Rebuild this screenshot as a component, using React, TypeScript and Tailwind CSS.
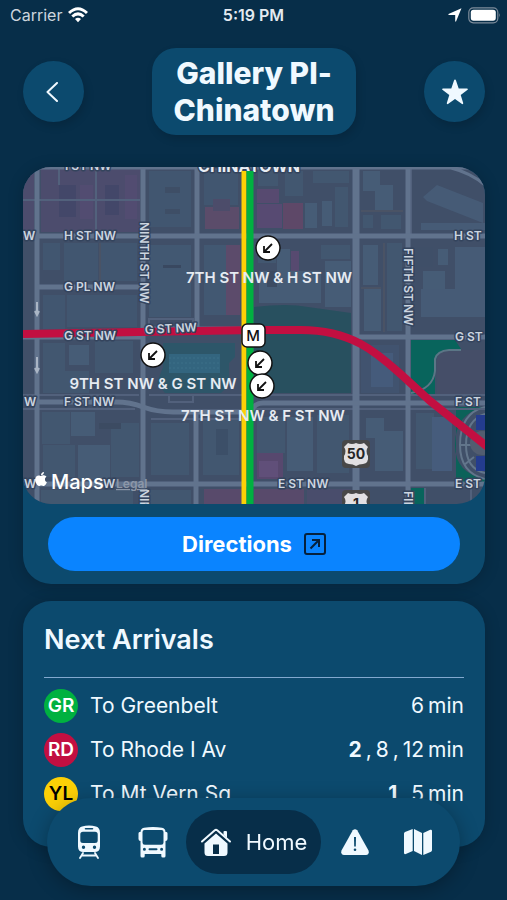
import type { ReactNode } from 'react';
import { FaApple } from 'react-icons/fa';

interface Arrival {
  code: string;
  destination: string;
  minutes: string[];
  badge: string;
  boarding?: boolean;
}

const ARRIVALS: Arrival[] = [
  { code: 'GR', destination: 'To Greenbelt', minutes: ['6'], badge: 'bg-[#00b140] text-white' },
  { code: 'RD', destination: 'To Rhode I Av', minutes: ['2', '8', '12'], badge: 'bg-[#c20f41] text-white', boarding: true },
  { code: 'YL', destination: 'To Mt Vern Sq', minutes: ['1', '5'], badge: 'bg-[#fcd006] text-black', boarding: true }
];

// [x, y, width, height, fill]
const BLOCKS: [number, number, number, number, string][] = [
  [18, 0, 99, 65, '#4c4c6d'],
  [0, 0, 11, 65, '#4c4c6d'],
  [36, 18, 17, 32, '#434769'],
  [57, 18, 13, 34, '#524c71'],
  [82, 18, 14, 30, '#434769'],
  [102, 8, 12, 44, '#524c71'],
  [126, 4, 42, 56, '#415670'],
  [142, 20, 15, 6, '#3e4e66'],
  [142, 42, 15, 5, '#3e4e66'],
  [181, 3, 34, 35, '#415670'],
  [182, 40, 34, 22, '#5b4c6a'],
  [190, 32, 17, 12, '#4c4c6a'],
  [20, 76, 17, 27, '#415670'],
  [41, 76, 34, 38, '#415670'],
  [78, 76, 36, 38, '#415670'],
  [20, 128, 22, 34, '#415670'],
  [44, 128, 70, 32, '#415670'],
  [126, 78, 42, 72, '#425872'],
  [140, 98, 18, 3, '#394860'],
  [181, 78, 22, 70, '#425872'],
  [203, 78, 14, 70, '#5c4b6b'],
  [235, 3, 20, 16, '#425770'],
  [234, 22, 22, 14, '#574a70'],
  [234, 37, 25, 24, '#574a72'],
  [260, 36, 20, 26, '#5e4868'],
  [282, 36, 12, 25, '#465c76'],
  [299, 34, 10, 25, '#465c76'],
  [262, 4, 18, 25, '#425770'],
  [290, 4, 36, 12, '#425770'],
  [312, 20, 13, 40, '#425770'],
  [340, 4, 17, 20, '#465c76'],
  [352, 18, 18, 26, '#465c76'],
  [340, 48, 10, 13, '#425770'],
  [358, 48, 20, 14, '#425770'],
  [235, 78, 18, 18, '#425770'],
  [254, 82, 13, 52, '#465c76'],
  [268, 84, 8, 20, '#574a70'],
  [236, 104, 62, 32, '#465c76'],
  [302, 94, 26, 46, '#465c76'],
  [298, 78, 29, 14, '#425770'],
  [244, 104, 10, 16, '#3c4b62'],
  [340, 78, 15, 40, '#465c76'],
  [341, 122, 17, 42, '#465c76'],
  [364, 76, 15, 88, '#425770'],
  [392, 80, 18, 20, '#3f4f68'],
  [400, 104, 22, 20, '#465c76'],
  [415, 82, 10, 16, '#465c76'],
  [432, 80, 30, 50, '#465b76'],
  [398, 122, 64, 28, '#465b76'],
  [338, 178, 38, 48, '#41536f'],
  [348, 186, 22, 34, '#455b7b'],
  [20, 176, 22, 28, '#425770'],
  [46, 178, 20, 20, '#465c76'],
  [72, 174, 38, 32, '#425770'],
  [20, 204, 46, 22, '#425770'],
  [19, 245, 28, 32, '#425770'],
  [48, 245, 24, 24, '#465c76'],
  [20, 278, 32, 32, '#425770'],
  [55, 278, 32, 34, '#465c76'],
  [88, 256, 28, 54, '#425770'],
  [76, 256, 22, 6, '#3c4b62'],
  [128, 256, 38, 52, '#425770'],
  [180, 252, 36, 56, '#425770'],
  [193, 262, 12, 26, '#3c4f68'],
  [234, 250, 28, 36, '#425770'],
  [264, 250, 26, 54, '#465c76'],
  [294, 248, 32, 58, '#425770'],
  [234, 286, 26, 26, '#57486e'],
  [236, 294, 19, 16, '#604f79'],
  [343, 251, 18, 20, '#465c76'],
  [352, 264, 28, 40, '#465c76'],
  [393, 246, 18, 56, '#425770'],
  [409, 250, 20, 54, '#465c7c'],
  [18, 323, 92, 14, '#435870'],
  [126, 323, 42, 14, '#425770'],
  [181, 322, 38, 15, '#584a6b'],
  [231, 322, 50, 15, '#584a6b'],
  [284, 322, 44, 15, '#494d6c']
];

const STREET_LABELS: [number, number, string][] = [
  [41, 73, 'H ST NW'],
  [41, 124, 'G PL NW'],
  [41, 173, 'G ST NW'],
  [41, 239, 'F ST NW'],
  [0, 73, 'W'],
  [1, 239, 'W'],
  [1, 321, 'W'],
  [80, 321, 'W'],
  [255, 321, 'E ST NW'],
  [431, 73, 'H ST'],
  [432, 174, 'G ST'],
  [432, 239, 'F ST'],
  [432, 321, 'E ST']
];

const STOPS: [number, number][] = [
  [245, 81],
  [130, 188],
  [237, 196],
  [239, 219]
];

function Shield({ x, y, route }: { x: number; y: number; route: string }) {
  return (
    <g transform={`translate(${x} ${y})`}>
      <rect x="-14" y="-14" width="28" height="28" rx="4" fill="#484848" />
      <path
        d="M-8-11Q-4-9 0-11Q4-9 8-11L12-7Q9-3 12 2Q13 9 7 10Q3 10 0 12Q-3 10-7 10Q-13 9-12 2Q-9-3-12-7Z"
        fill="#e2e0e2"
      />
      <text y="5" textAnchor="middle" fontSize="14" fontWeight="700" fill="#262626">
        {route}
      </text>
    </g>
  );
}

function StationMap() {
  return (
    <svg
      viewBox="0 0 462 337"
      className="block h-auto w-full rounded-[28px] font-[Inter,'Liberation_Sans',sans-serif]"
      role="img"
      aria-label="Map of Gallery Pl-Chinatown"
    >
      <rect width="462" height="337" fill="#404f68" />
      {BLOCKS.map(([x, y, width, height, fill], index) => (
        <rect key={index} x={x} y={y} width={width} height={height} fill={fill} />
      ))}
      <path d="M400 30L414 18L460 36V56L404 34ZM398 56H462V63H398Z" fill="#465b76" />

      {/* Museum and parks */}
      <path d="M231 140Q265 136 285 140L328 146V226H231Z" fill="#28505f" />
      <path d="M140 176H212V190L206 196V218L198 226H142L134 216L140 200Z" fill="#2d5669" />
      <path d="M146 187H197V206H146Z" fill="#33657f" />
      <path d="M146 191H197M146 196H197M146 201H197" stroke="#3d7089" strokeDasharray="2 2" />
      <path d="M388 173H432L438 182L418 185Q412 188 412 202V228H388Z" fill="#08645c" />
      <path d="M462 240Q432 246 432 278Q432 306 462 312V317H433V240Z" fill="#0b6259" />
      <rect x="388" y="321" width="14" height="16" fill="#08645c" />
      <path d="M414 228V192Q414 184 426 183H462V228Z" fill="#454e68" />
      <path d="M388 226Q410 222 412 204V192Q414 184 426 183H438" fill="none" stroke="#5b7686" strokeWidth="2" />
      <path d="M462 240Q437 246 437 278Q437 306 462 312M462 247Q443 253 443 278Q443 302 462 306M437 278H448M441 258L451 266M441 298L451 290" fill="none" stroke="#62758b" strokeWidth="2" />
      <circle cx="459" cy="276" r="12" fill="#525d70" />
      <path d="M453 248H462V263H453ZM453 289H462V304H453Z" fill="#243c8f" />

      {/* Minor ways */}
      <g fill="none" stroke="#52617c" strokeWidth="2">
        <path d="M0 33H117M73 0V65M36 0V18" />
        <path d="M0 228H116M0 242H112M126 228H219M128 252H219M231 228H462M231 242H462" />
        <path d="M388 0V70M126 163H170V152H126ZM146 227V235H170V227" />
        <path d="M77 76V114M338 44H380M338 121H358" stroke="#4a5365" />
        <path d="M361 76V165" stroke="#4a5365" />
        <path d="M402 321V337M448 322V337" />
      </g>
      {/* Streets */}
      <g fill="none" stroke="#61738d" strokeWidth="5">
        <path d="M14 0V337M120 0V337M174 0V163M173 246V337M385 0V337" />
        <path d="M333 0V337" strokeWidth="7" />
        <path d="M0 69H462M14 120H118M0 170H120M120 162H219M333 170H462M0 317H462" />
        <path d="M14 235H92Q108 235 120 240Q134 245 150 245H219M229 243Q232 236 240 236H462" />
        <path d="M428 1Q448 6 462 18M0 1H462" strokeWidth="3" />
      </g>
      <path d="M14 135V147M12 144L14 148L16 144M14 190V204M12 201L14 205L16 201" fill="none" stroke="#aab5c5" strokeWidth="2" />

      <g fontSize="12" fontWeight="600" fill="#ccd5e0" stroke="#34445d" strokeWidth="3" strokeLinejoin="round" paintOrder="stroke">
        <text x="42" y="3">I ST NW</text>
        <text x="226" y="5" textAnchor="middle" fontSize="16" fontWeight="700" fill="#e8edf4">
          CHINATOWN
        </text>
      </g>

      {/* Metro lines */}
      <path d="M0 167L232 163H278C334 163 359 191 382 211L407 234L466 281" fill="none" stroke="#c20f41" strokeWidth="8" />
      <path d="M221 4V337" stroke="#fcd006" strokeWidth="5" />
      <path d="M227 4V337" stroke="#00b140" strokeWidth="7" />

      <g fontSize="12" fontWeight="600" fill="#ccd5e0" stroke="#34445d" strokeWidth="3" strokeLinejoin="round" paintOrder="stroke">
        {STREET_LABELS.map(([x, y, label]) => (
          <text key={`${label}-${x}-${y}`} x={x} y={y}>
            {label}
          </text>
        ))}
        <text transform="translate(122 167) rotate(-3)">G ST NW</text>
        <text transform="translate(117 55) rotate(90)">NINTH ST NW</text>
        <text transform="translate(381 81) rotate(90)">FIFTH ST NW</text>
        <text transform="translate(117 322) rotate(90)">NINTH</text>
        <text transform="translate(381 324) rotate(90)">FIFTH</text>
      </g>
      <Shield x={333} y={287} route="50" />
      <Shield x={333} y={337} route="1" />

      {STOPS.map(([x, y]) => (
        <g key={`${x}-${y}`} transform={`translate(${x} ${y})`}>
          <circle r="12" fill="#fff" stroke="#111" strokeWidth="1.5" />
          <path d="M4-4L-4 4M-4-2V4H2" fill="none" stroke="#111" strokeWidth="1.8" />
        </g>
      ))}
      <rect x="219" y="157" width="23" height="23" rx="5" fill="#fff" stroke="#111" strokeWidth="1.5" />
      <text x="230" y="174" textAnchor="middle" fontSize="15" fontWeight="500" fill="#111">
        M
      </text>
      <g fontSize="15" fontWeight="600" fill="#e6ebf2" textAnchor="middle">
        <text x="246" y="116">7TH ST NW &amp; H ST NW</text>
        <text x="130" y="222">9TH ST NW &amp; G ST NW</text>
        <text x="240" y="254">7TH ST NW &amp; F ST NW</text>
      </g>

      <FaApple x="10" y="304" width="20" height="19" color="#fff" />
      <text x="28" y="322" fontSize="20" fontWeight="500" fill="#fff">
        Maps
      </text>
      <a href="#legal">
        <text x="93" y="321" fontSize="12" fontWeight="600" fill="#8c97a8" textDecoration="underline">
          Legal
        </text>
      </a>
    </svg>
  );
}

function TrainIcon() {
  return (
    <svg viewBox="0 0 24 34" className="h-[34px] w-6" fill="currentColor">
      <path
        fillRule="evenodd"
        d="M5 1.500Q12-.5 19 1.500Q23 2.500 23 8V21.500Q23 27 17.500 27H6.500Q1 27 1 21.500V8Q1 2.500 5 1.500ZM8.500 3Q7.700 3 7.700 3.800Q7.700 4.600 8.500 4.600H15.500Q16.300 4.600 16.300 3.800Q16.300 3 15.500 3ZM6 6.700Q3.300 6.700 3.300 9.500V15.500Q3.300 18 6 18H18Q20.700 18 20.700 15.500V9.500Q20.700 6.700 18 6.700ZM4.800 22.200A1.700 1.700 0 1 0 8.200 22.200A1.700 1.700 0 1 0 4.800 22.200ZM15.800 22.200A1.700 1.700 0 1 0 19.200 22.200A1.700 1.700 0 1 0 15.800 22.200Z"
      />
      <path d="M6 28L3 33M18 28L21 33M5 30.500H19" fill="none" stroke="currentColor" strokeWidth="1.800" strokeLinecap="round" />
    </svg>
  );
}

function BusIcon() {
  return (
    <svg viewBox="0 0 30 32" className="h-8 w-[30px]" fill="currentColor">
      <path
        fillRule="evenodd"
        d="M2.500 6Q2.500 2.500 6 1.800Q15 .4 24 1.800Q27.500 2.500 27.500 6H28.500Q29.500 6 29.500 7.500V13Q29.500 15 27.500 15V30Q27.500 31.500 26 31.500H24.800Q23.300 31.500 23.300 30V28H6.700V30Q6.700 31.500 5.200 31.500H4Q2.500 31.500 2.500 30V15Q.5 15 .5 13V7.500Q.5 6 1.500 6ZM6.500 4Q4.500 4 4.500 6V16.500Q4.500 18.800 6.800 18.800H23.200Q25.500 18.800 25.500 16.500V6Q25.500 4 23.500 4ZM4.900 23.300A1.500 1.500 0 1 0 7.900 23.300A1.500 1.500 0 1 0 4.900 23.300ZM22.100 23.300A1.500 1.500 0 1 0 25.100 23.300A1.500 1.500 0 1 0 22.100 23.300ZM11.500 22.300Q10.500 22.300 10.500 23.300Q10.500 24.300 11.500 24.300H18.500Q19.500 24.300 19.500 23.300Q19.500 22.300 18.500 22.300Z"
      />
    </svg>
  );
}

function HomeIcon() {
  return (
    <svg viewBox="0 0 32 30" className="h-[30px] w-8" fill="currentColor">
      <path d="M2 14.500L14.800 3.300Q16 2.400 17.200 3.300L30 14.500" fill="none" stroke="currentColor" strokeWidth="2" strokeLinecap="round" />
      <path d="M23.500 5Q23.500 4 24.500 4H26Q27 4 27 5V11L23.500 7.800Z" />
      <path fillRule="evenodd" d="M16 6.500L27.500 16.500V25.500Q27.500 29 24 29H8Q4.500 29 4.500 25.500V16.500ZM13 17.500V27H19V17.500Z" />
    </svg>
  );
}

function AlertIcon() {
  return (
    <svg viewBox="0 0 28 26" className="h-[26px] w-7">
      <path d="M11.800 1.300Q14-.8 16.200 1.300L27.500 21.500Q28.600 25.500 25 26H3Q-.6 25.500 .5 21.500Z" fill="currentColor" />
      <path d="M13 8H15L14.800 17.500H13.200Z" fill="#0c4a6e" />
      <circle cx="14" cy="20.700" r="1.300" fill="#0c4a6e" />
    </svg>
  );
}

function MapIcon() {
  return (
    <svg viewBox="0 0 28 26" className="h-[26px] w-7" fill="currentColor">
      <path d="M0 4.500Q0 3.500 1 3L8.700 0V22L1.800 25Q0 25.500 0 24ZM10 0L18 4V26L10 22ZM19.300 4L26.200 .8Q28 .2 28 2V21Q28 22 27 22.700L19.300 26Z" />
    </svg>
  );
}

function RoundButton({ label, children }: { label: string; children: ReactNode }) {
  return (
    <button
      type="button"
      aria-label={label}
      className="flex size-[61px] shrink-0 items-center justify-center rounded-full bg-[#0c4a6e] shadow-[2px_4px_8px_rgba(0,0,0,0.15)]"
    >
      {children}
    </button>
  );
}

function StatusBar() {
  return (
    <div className="grid h-[30px] grid-cols-3 items-center px-2.5 text-base">
      <div className="flex items-center gap-1.5 text-[#ccd5de]">
        <span>Carrier</span>
        <svg viewBox="0 0 20 16" className="h-4 w-5" fill="none" stroke="#fff" strokeWidth="3">
          <path d="M1 6Q10-2.500 19 6M4.300 9.500Q10 4.300 15.700 9.500" />
          <path d="M7 12Q10 9.300 13 12L10 15.300Z" fill="#fff" stroke="none" />
        </svg>
      </div>
      <span className="text-center font-semibold text-[#e4eaf0]">5:19 PM</span>
      <div className="flex items-center justify-end gap-1.5">
        <svg viewBox="0 0 14 14" className="h-3.5 w-3.5" fill="#fff">
          <path d="M13.500 .3L8 13.500Q7.400 14 7.200 13V7H.8Q0 6.700 .5 6Z" />
        </svg>
        <svg viewBox="0 0 33 17" className="-mr-1 h-[17px] w-[33px]">
          <rect x=".8" y=".8" width="29" height="15" rx="4.500" fill="none" stroke="#7d8c9b" strokeWidth="1.200" />
          <rect x="2.800" y="2.800" width="25" height="11" rx="2.800" fill="#fff" />
          <path d="M31.300 6Q33 8.300 31.300 10.600Z" fill="#7d8c9b" />
        </svg>
      </div>
    </div>
  );
}

export default function App() {
  return (
    <div className="min-h-screen bg-[#072e49] pb-[50px] font-[Inter,'Liberation_Sans',sans-serif] text-[#f0f9ff]">
      <StatusBar />

      <header className="flex items-center justify-between pt-[18px] pr-[22px] pl-[23px]">
        <RoundButton label="Back">
          <svg viewBox="0 0 16 20" className="h-5 w-4" fill="none" stroke="currentColor" strokeWidth="2" strokeLinecap="round" strokeLinejoin="round">
            <path d="M11 1L1.500 10L11 19" />
          </svg>
        </RoundButton>
        <h1 className="rounded-3xl bg-[#0c4a6e] px-[22px] pt-[7px] pb-1.5 text-center text-[30px] leading-[37px] font-extrabold shadow-[2px_4px_8px_rgba(0,0,0,0.15)]">
          Gallery Pl-
          <br />
          Chinatown
        </h1>
        <RoundButton label="Favorite">
          <svg viewBox="0 0 26 26" className="size-[26px]" fill="currentColor">
            <path d="M13 .5Q13.700 .5 14 1.500L16.700 9.500H25Q26.500 10 25.300 11.100L18.700 16L21.200 24Q21.400 25.500 20 25L13 20L6 25Q4.600 25.500 4.800 24L7.300 16L.7 11.100Q-.5 10 1 9.500H9.300L12 1.500Q12.300 .5 13 .5Z" />
          </svg>
        </RoundButton>
      </header>

      <main className="flex flex-col gap-[17px] pt-8 pr-[22px] pl-[23px]">
        <section className="rounded-[28px] bg-[#0c4a6e] pb-[13px] shadow-[0_2px_16px_rgba(0,0,0,0.2)]">
          <StationMap />
          <div className="px-[25px] pt-[13px]">
            <button type="button" className="flex h-[54px] w-full items-center justify-center gap-3 rounded-full bg-[#0a84ff] text-[22px] font-bold text-white">
              Directions
              <svg viewBox="0 0 22 22" className="size-[22px]" fill="none" stroke="#06213d" strokeWidth="2">
                <rect x="1" y="1" width="20" height="20" rx="2" />
                <path d="M6.500 15.500L14.500 7.500M8 7H15V14" />
              </svg>
            </button>
          </div>
        </section>

        <section className="rounded-[28px] bg-[#0c4a6e] px-[21px] pt-[21px] pb-9 shadow-[0_2px_16px_rgba(0,0,0,0.2)]">
          <h2 className="border-b border-[#83a9cf] pb-[19px] text-[27px] leading-9 font-semibold">Next Arrivals</h2>
          <ul className="flex flex-col gap-2.5 pt-[11px] text-[21px]">
            {ARRIVALS.map((arrival) => (
              <li key={arrival.code} className="flex h-[34px] items-center">
                <span className={`mr-3 flex size-[34px] items-center justify-center rounded-full text-[19px] font-semibold ${arrival.badge}`}>
                  {arrival.code}
                </span>
                <span>{arrival.destination}</span>
                <span className="ml-auto flex gap-1">
                  {arrival.minutes.map((minute, index) => (
                    <span key={minute} className="flex gap-1">
                      <span className={arrival.boarding && index === 0 ? 'font-bold' : ''}>{minute}</span>
                      {index < arrival.minutes.length - 1 && <span>,</span>}
                    </span>
                  ))}
                  <span>min</span>
                </span>
              </li>
            ))}
          </ul>
        </section>
      </main>

      <nav className="fixed inset-x-[47px] bottom-3.5 flex h-[88px] items-center justify-between rounded-full bg-[#0c4a6e] px-3 shadow-[0_4px_20px_rgba(0,0,0,0.3)]">
        <button type="button" aria-label="Trains" className="flex h-16 w-15 items-center justify-center">
          <TrainIcon />
        </button>
        <button type="button" aria-label="Buses" className="flex h-16 w-15 items-center justify-center">
          <BusIcon />
        </button>
        <button type="button" className="flex h-16 w-[135px] items-center justify-center gap-3.5 rounded-full bg-[#072e49] text-[22px]">
          <HomeIcon />
          Home
        </button>
        <button type="button" aria-label="Alerts" className="flex h-16 w-15 items-center justify-center">
          <AlertIcon />
        </button>
        <button type="button" aria-label="Map" className="flex h-16 w-15 items-center justify-center">
          <MapIcon />
        </button>
      </nav>
    </div>
  );
}
